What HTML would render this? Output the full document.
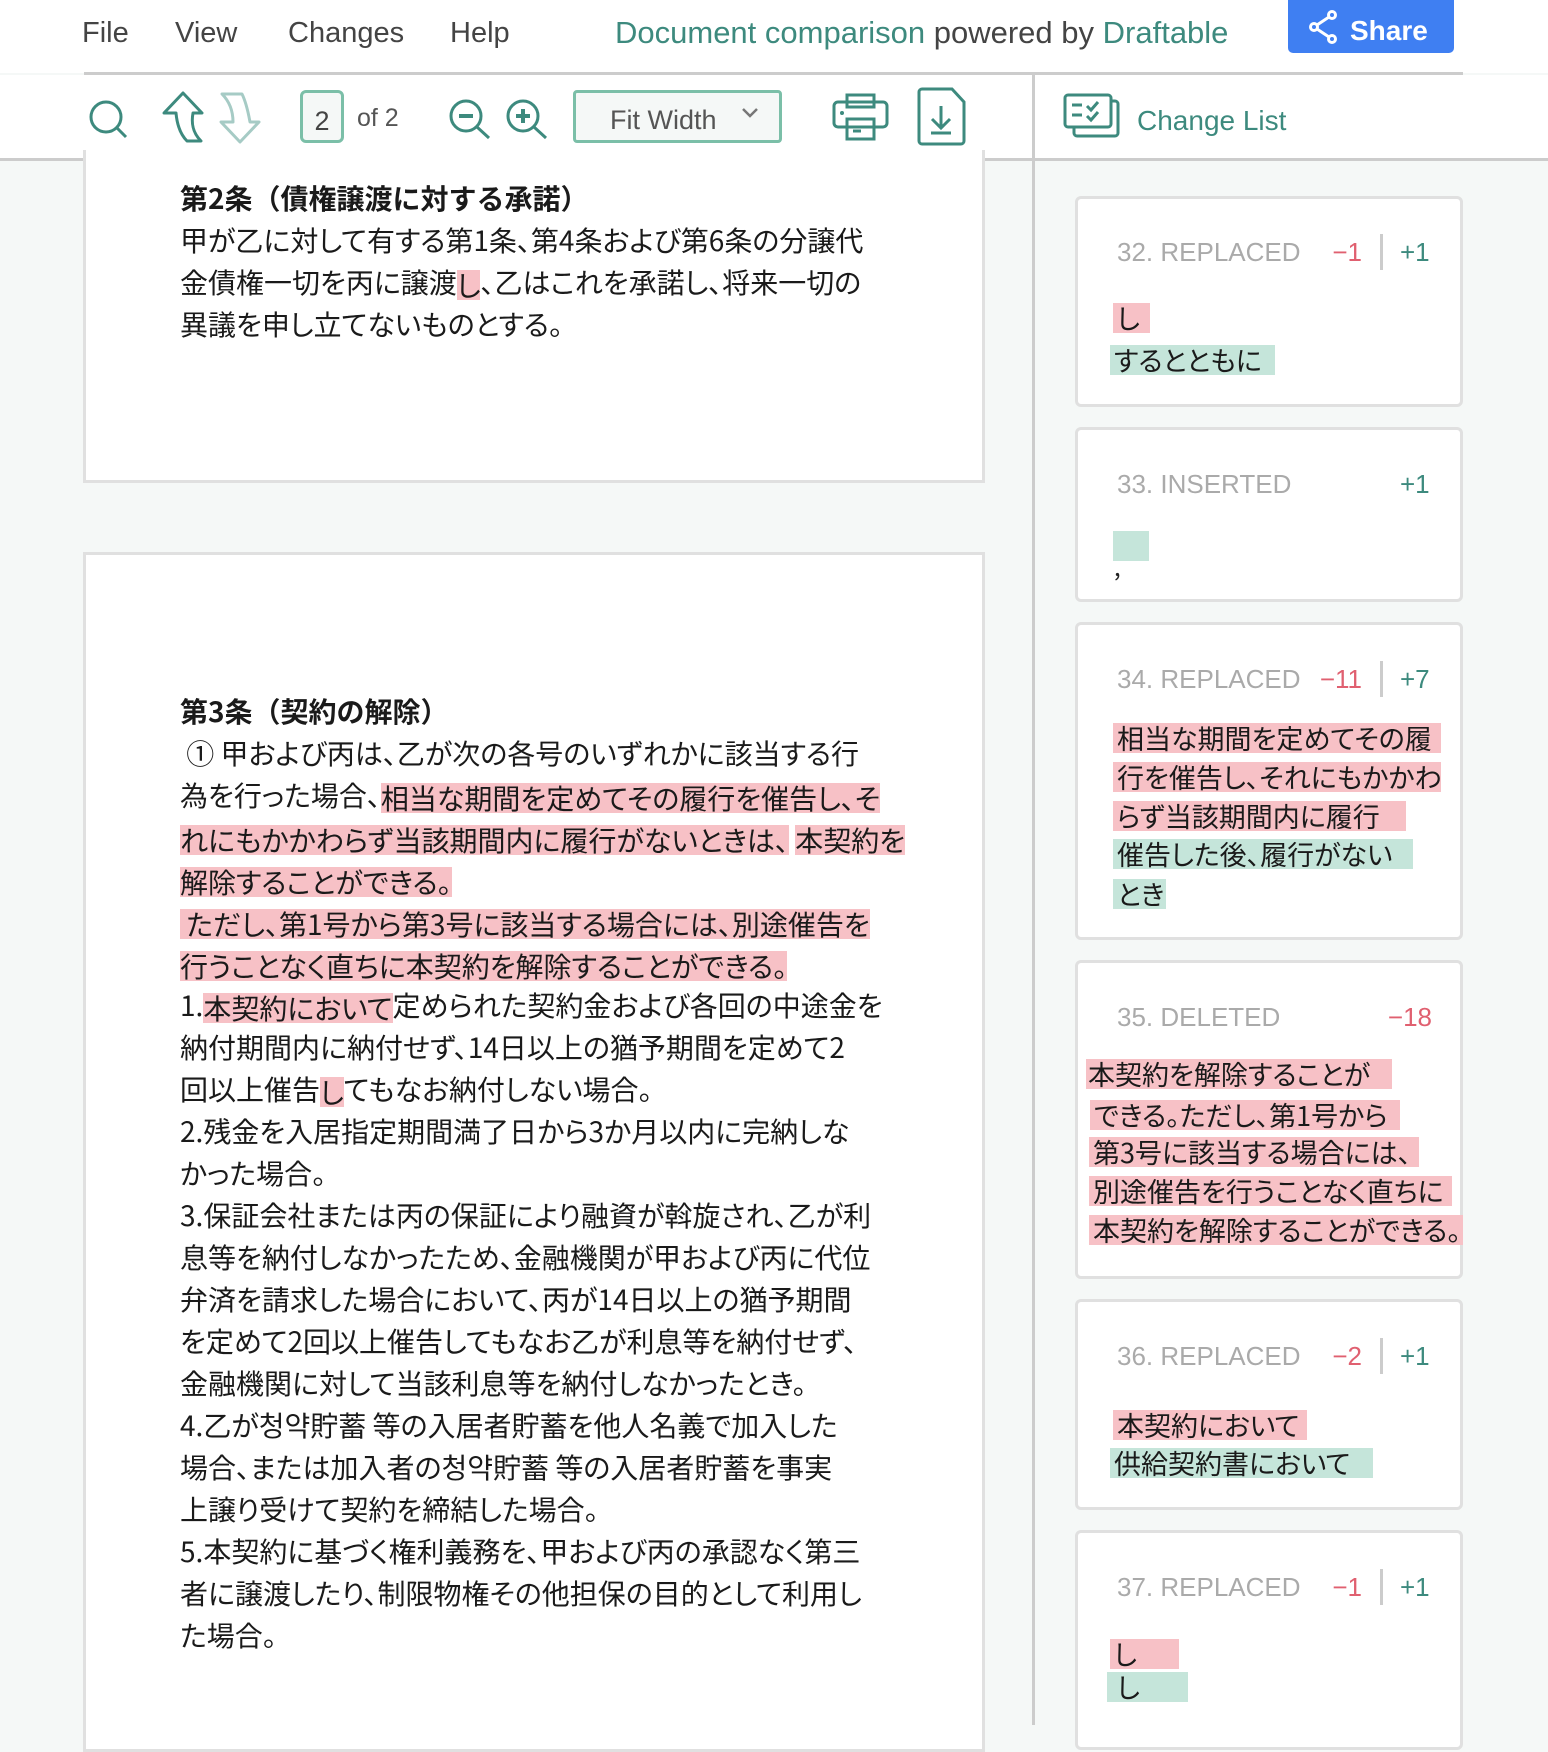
<!DOCTYPE html>
<html><head><meta charset="utf-8"><style>
*{margin:0;padding:0;box-sizing:border-box}
body{width:1548px;height:1725px;overflow:hidden;background:#f5f8f7;font-family:"Liberation Sans","Noto Sans CJK JP",sans-serif;position:relative;color:#222}
.abs{position:absolute}
.menu{position:absolute;top:17px;font-size:29px;color:#444;white-space:nowrap}
.jp{font-family:"Noto Sans CJK JP","Liberation Sans",sans-serif;font-feature-settings:"palt";white-space:nowrap}
.ln{position:absolute;left:180px;height:42px;line-height:42px;font-size:28px;color:#1a1a1a}
.tt{font-weight:bold;font-feature-settings:normal}
.p{background:#f7c1c6}.g{background:#c5e5da}
.ln span{display:inline-block;line-height:30px;height:30px;vertical-align:middle}
.card{position:absolute;left:1075px;width:388px;background:#fff;border:3px solid #e0e0e0;border-radius:6px}
.hd{position:absolute;left:1117px;font-size:26px;color:#aaa;height:36px;line-height:36px;font-family:"Liberation Sans",sans-serif}
.mn{position:absolute;font-size:26px;color:#e06070;height:36px;line-height:36px;text-align:right}
.pl{position:absolute;font-size:26px;color:#3d8a7e;height:36px;line-height:36px}
.dv{position:absolute;left:1380px;width:3px;height:36px;background:#ccc}
.hl{position:absolute;height:30px;line-height:30px;font-size:27px;color:#1a1a1a;padding-left:4px}
</style></head><body>
<div class="abs" style="left:0;top:0;width:1548px;height:73px;background:#fff"></div>
<div class="menu" style="left:82px">File</div>
<div class="menu" style="left:175px">View</div>
<div class="menu" style="left:288px">Changes</div>
<div class="menu" style="left:450px">Help</div>
<div class="menu" style="left:615px;color:#444;font-size:31px;top:15px"><span style="color:#3d8a7e">Document comparison</span> powered by <span style="color:#3d8a7e">Draftable</span></div>
<div class="abs" style="left:1288px;top:0;width:166px;height:53px;background:#3f7ff2;border-radius:0 0 5px 5px;color:#fff;font-size:28px;font-weight:bold;line-height:62px;padding-left:62px">Share</div>
<svg class="abs" style="left:1308px;top:10px" width="32" height="34" viewBox="0 0 32 34"><g fill="none" stroke="#fff" stroke-width="3"><circle cx="24" cy="5" r="3.5"/><circle cx="6" cy="17" r="3.5"/><circle cx="24" cy="29" r="3.5"/><path d="M9 15 21 7M9 19 21 27"/></g></svg>
<div class="abs" style="left:84px;top:72px;width:1379px;height:3px;background:#ccc"></div>
<div class="abs" style="left:0;top:75px;width:1548px;height:83px;background:#fff"></div>
<div class="abs" style="left:0;top:158px;width:1548px;height:3px;background:#ccc"></div>
<div class="abs" style="left:1032px;top:75px;width:3px;height:1650px;background:#ccc"></div>
<svg class="abs" style="left:0;top:75px" width="1032" height="83" viewBox="0 75 1032 83">
<g fill="none" stroke="#3d8a7e" stroke-width="3">
<circle cx="106" cy="117" r="15"/><path d="M117 128 126 137"/>
<path d="M183 93 202 113 193 113 C191 124 193 133 201 141 L187 141 C180 134 177 124 176 113 L164 113 Z" stroke-linejoin="round"/>
<path d="M240 142 259 122 250 122 C248 111 246 102 242 94 L222 94 C230 102 233 111 233 122 L221 122 Z" stroke="#a6cbc5" stroke-linejoin="round"/>
<circle cx="466" cy="116" r="15"/><path d="M459 116h14" stroke-width="4"/><path d="M477 127 489 138"/>
<circle cx="523" cy="116" r="15"/><path d="M516 116h14M523 109v14" stroke-width="4"/><path d="M534 127 546 138"/>
<rect x="834" y="102" width="53" height="25" rx="4"/><rect x="847" y="95" width="27" height="12"/><rect x="847" y="119" width="27" height="20"/><path d="M853 131h8"/>
<path d="M922 89h30l12 13v39a3 3 0 0 1-3 3h-39a3 3 0 0 1-3-3V92a3 3 0 0 1 3-3z"/><path d="M941 106v21M932 119l9 9 9-9M931 133h20"/>
</g>
<circle cx="842" cy="113" r="2" fill="#3d8a7e"/>
</svg>
<div class="abs" style="left:300px;top:90px;width:44px;height:53px;border:3px solid #7bbfa8;border-radius:6px;background:#f5f8f7;font-size:27px;color:#444;text-align:center;line-height:56px">2</div>
<div class="abs" style="left:357px;top:104px;font-size:25px;color:#555">of 2</div>
<div class="abs" style="left:573px;top:90px;width:209px;height:53px;border:3px solid #7bbfa8;border-radius:4px;background:#f5f8f7;font-size:27px;color:#555;line-height:54px;padding-left:34px">Fit Width</div>
<svg class="abs" style="left:740px;top:106px" width="20" height="14"><path d="M3 3 10 10 17 3" fill="none" stroke="#777" stroke-width="2.5"/></svg>
<svg class="abs" style="left:1063px;top:93px" width="58" height="46" viewBox="0 0 58 46"><g fill="none" stroke="#3d8a7e" stroke-width="3"><rect x="2" y="2" width="46" height="32" rx="3"/><path d="M48 8h4a3 3 0 0 1 3 3v29a3 3 0 0 1-3 3H14a3 3 0 0 1-3-3v-6"/><path d="M9 12h10M9 22h10M24 13l4 4 7-8M24 23l4 4 7-8"/></g></svg>
<div class="abs" style="left:1137px;top:105px;font-size:28px;color:#3d8a7e">Change List</div>
<div class="abs" style="left:83px;top:150px;width:902px;height:333px;background:#fff;border:3px solid #e0e0e0;border-top:none"></div>
<div class="abs" style="left:83px;top:552px;width:902px;height:1200px;background:#fff;border:3px solid #e0e0e0"></div>
<div class="jp">
<div class="ln tt" style="top:177px">第2条（債権譲渡に対する承諾）</div>
<div class="ln" style="top:219px">甲が乙に対して有する第1条、第4条および第6条の分譲代</div>
<div class="ln" style="top:261px">金債権一切を丙に譲渡<span class="p">し</span>、乙はこれを承諾し、将来一切の</div>
<div class="ln" style="top:303px">異議を申し立てないものとする。</div>

<div class="ln tt" style="top:690px">第3条（契約の解除）</div>
<div class="ln" style="top:732px">&nbsp;① 甲および丙は、乙が次の各号のいずれかに該当する行</div>
<div class="ln" style="top:774px">為を行った場合、<span class="p">相当な期間を定めてその履行を催告し、そ</span></div>
<div class="ln" style="top:816px"><span class="p">れにもかかわらず当該期間内に履行がないときは、</span> <span class="p">本契約を</span></div>
<div class="ln" style="top:858px"><span class="p">解除することができる。</span></div>
<div class="ln" style="top:900px"><span class="p">&nbsp;ただし、第1号から第3号に該当する場合には、別途催告を</span></div>
<div class="ln" style="top:942px"><span class="p">行うことなく直ちに本契約を解除することができる。</span></div>
<div class="ln" style="top:984px">1.<span class="p">本契約において</span>定められた契約金および各回の中途金を</div>
<div class="ln" style="top:1026px">納付期間内に納付せず、14日以上の猶予期間を定めて2</div>
<div class="ln" style="top:1068px">回以上催告<span class="p">し</span>てもなお納付しない場合。</div>
<div class="ln" style="top:1110px">2.残金を入居指定期間満了日から3か月以内に完納しな</div>
<div class="ln" style="top:1152px">かった場合。</div>
<div class="ln" style="top:1194px">3.保証会社または丙の保証により融資が斡旋され、乙が利</div>
<div class="ln" style="top:1236px">息等を納付しなかったため、金融機関が甲および丙に代位</div>
<div class="ln" style="top:1278px">弁済を請求した場合において、丙が14日以上の猶予期間</div>
<div class="ln" style="top:1320px">を定めて2回以上催告してもなお乙が利息等を納付せず、</div>
<div class="ln" style="top:1362px">金融機関に対して当該利息等を納付しなかったとき。</div>
<div class="ln" style="top:1404px">4.乙が청약貯蓄 等の入居者貯蓄を他人名義で加入した</div>
<div class="ln" style="top:1446px">場合、または加入者の청약貯蓄 等の入居者貯蓄を事実</div>
<div class="ln" style="top:1488px">上譲り受けて契約を締結した場合。</div>
<div class="ln" style="top:1530px">5.本契約に基づく権利義務を、甲および丙の承認なく第三</div>
<div class="ln" style="top:1572px">者に譲渡したり、制限物権その他担保の目的として利用し</div>
<div class="ln" style="top:1614px">た場合。</div>
</div>
<div class="card" style="top:196px;height:211px"></div>
<div class="card" style="top:427px;height:175px"></div>
<div class="card" style="top:622px;height:318px"></div>
<div class="card" style="top:960px;height:319px"></div>
<div class="card" style="top:1299px;height:211px"></div>
<div class="card" style="top:1530px;height:220px"></div>

<div class="hd" style="top:234px">32. REPLACED</div><div class="mn" style="left:1300px;width:62px;top:234px">−1</div><div class="dv" style="top:234px"></div><div class="pl" style="left:1400px;top:234px">+1</div>
<div class="hd" style="top:466px">33. INSERTED</div><div class="pl" style="left:1400px;top:466px">+1</div>
<div class="hd" style="top:661px">34. REPLACED</div><div class="mn" style="left:1300px;width:62px;top:661px">−11</div><div class="dv" style="top:661px"></div><div class="pl" style="left:1400px;top:661px">+7</div>
<div class="hd" style="top:999px">35. DELETED</div><div class="mn" style="left:1330px;width:102px;top:999px">−18</div>
<div class="hd" style="top:1338px">36. REPLACED</div><div class="mn" style="left:1300px;width:62px;top:1338px">−2</div><div class="dv" style="top:1338px"></div><div class="pl" style="left:1400px;top:1338px">+1</div>
<div class="hd" style="top:1569px">37. REPLACED</div><div class="mn" style="left:1300px;width:62px;top:1569px">−1</div><div class="dv" style="top:1569px"></div><div class="pl" style="left:1400px;top:1569px">+1</div>

<div class="jp">
<div class="hl p" style="left:1113px;top:303px;width:37px">し</div>
<div class="hl g" style="left:1110px;top:345px;width:165px">するとともに</div>
<div class="hl g" style="left:1113px;top:531px;width:36px"></div>
<div class="abs" style="left:1114px;top:548px;font-size:24px">,</div>

<div class="hl p" style="left:1113px;top:723px;width:328px">相当な期間を定めてその履</div>
<div class="hl p" style="left:1113px;top:762px;width:328px">行を催告し、それにもかかわ</div>
<div class="hl p" style="left:1113px;top:801px;width:293px">らず当該期間内に履行</div>
<div class="hl g" style="left:1113px;top:839px;width:300px">催告した後、履行がない</div>
<div class="hl g" style="left:1113px;top:879px;width:53px">とき</div>

<div class="hl p" style="left:1086px;top:1059px;width:306px;padding-left:2px">本契約を解除することが</div>
<div class="hl p" style="left:1090px;top:1100px;width:310px">できる。ただし、第1号から</div>
<div class="hl p" style="left:1089px;top:1137px;width:330px">第3号に該当する場合には、</div>
<div class="hl p" style="left:1089px;top:1176px;width:363px">別途催告を行うことなく直ちに</div>
<div class="hl p" style="left:1089px;top:1215px;width:374px">本契約を解除することができる。</div>

<div class="hl p" style="left:1113px;top:1410px;width:194px">本契約において</div>
<div class="hl g" style="left:1110px;top:1448px;width:263px">供給契約書において</div>

<div class="hl p" style="left:1110px;top:1639px;width:69px">し</div>
<div class="hl g" style="left:1107px;top:1672px;width:81px;padding-left:10px">し</div>
</div>
</body></html>
